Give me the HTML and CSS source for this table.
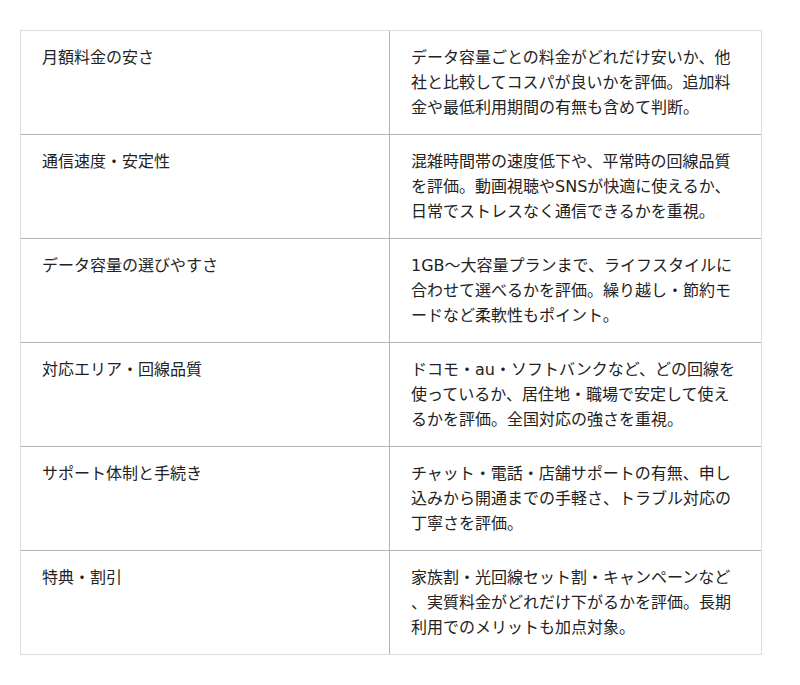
FILE: index.html
```html
<!DOCTYPE html>
<html lang="ja">
<head>
<meta charset="utf-8">
<link rel="stylesheet" href="styles.css">
</head>
<body>
<div class="table">
  <div class="row">
    <div class="cell key">月額料金の安さ</div>
    <div class="cell val">データ容量ごとの料金がどれだけ安いか、他社と比較してコスパが良いかを評価。追加料金や最低利用期間の有無も含めて判断。</div>
  </div>
  <div class="row">
    <div class="cell key">通信速度・安定性</div>
    <div class="cell val">混雑時間帯の速度低下や、平常時の回線品質を評価。動画視聴やSNSが快適に使えるか、日常でストレスなく通信できるかを重視。</div>
  </div>
  <div class="row">
    <div class="cell key">データ容量の選びやすさ</div>
    <div class="cell val">1GB～大容量プランまで、ライフスタイルに合わせて選べるかを評価。繰り越し・節約モードなど柔軟性もポイント。</div>
  </div>
  <div class="row">
    <div class="cell key">対応エリア・回線品質</div>
    <div class="cell val">ドコモ・au・ソフトバンクなど、どの回線を使っているか、居住地・職場で安定して使えるかを評価。全国対応の強さを重視。</div>
  </div>
  <div class="row">
    <div class="cell key">サポート体制と手続き</div>
    <div class="cell val">チャット・電話・店舗サポートの有無、申し込みから開通までの手軽さ、トラブル対応の丁寧さを評価。</div>
  </div>
  <div class="row">
    <div class="cell key">特典・割引</div>
    <div class="cell val">家族割・光回線セット割・キャンペーンなど、実質料金がどれだけ下がるかを評価。長期利用でのメリットも加点対象。</div>
  </div>
</div>
</body>
</html>
```
FILE: styles.css
```css
html, body {
  margin: 0;
  padding: 0;
  background: #fff;
}
body {
  padding: 30px 38px 30px 20px;
  font-family: "DejaVu Sans", "Noto Sans CJK JP", sans-serif;
  font-size: 16px;
  line-height: 25px;
  color: #222;
}
.table {
  width: 740px;
  border: 1px solid #dcdcdc;
}
.row {
  display: grid;
  grid-template-columns: 369px 1fr;
  border-top: 1px solid #b4b4b4;
}
.row:first-child {
  border-top: none;
}
.cell {
  padding: 14px 20px 14px 21px;
  min-height: 75px;
}
.key {
  border-right: 1px solid #b4b4b4;
}
.val {
  padding-right: 20px;
  line-break: anywhere;
}
```
